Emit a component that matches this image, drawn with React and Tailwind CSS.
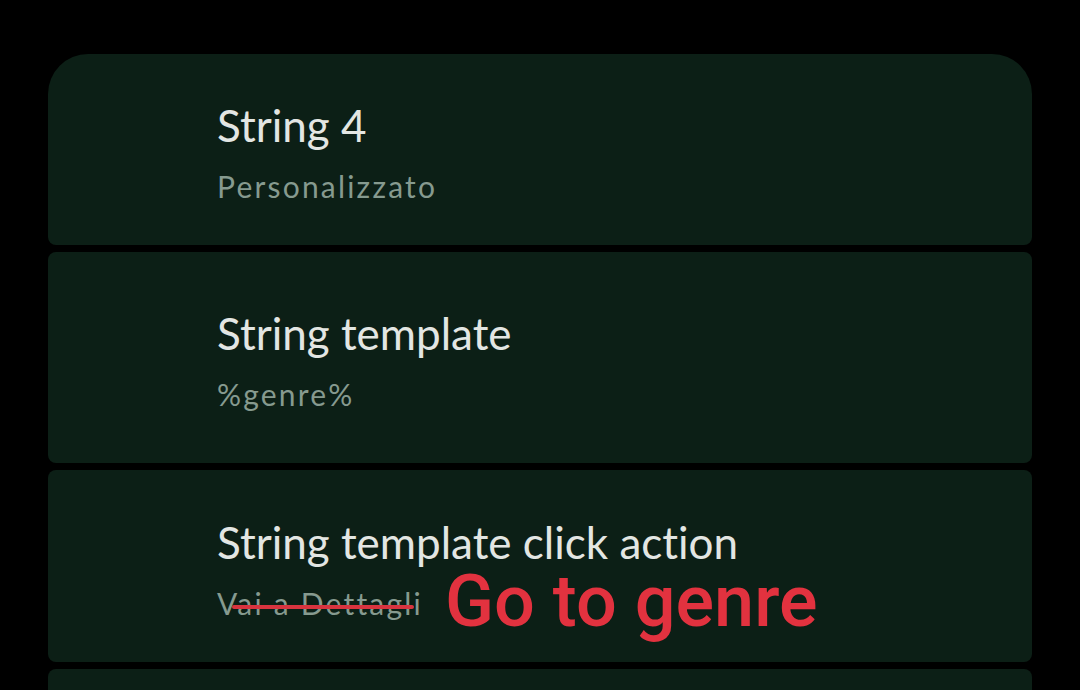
export default function App() {
  const title = "text-[44px] leading-[52px] text-[#e3e6e3] [font-variant-ligatures:none]";
  const sub = "mt-[15px] text-[30px] leading-[40px] tracking-[2.2px] text-[#869a8f] [font-variant-ligatures:none]";
  return (
    <div
      className="w-[1080px] h-[690px] bg-black overflow-hidden pt-[54px] px-[48px] flex flex-col gap-[7px]"
      style={{ fontFamily: "Lato, 'Noto Sans', sans-serif" }}
    >
      <div className="h-[191px] shrink-0 bg-[#0c1f16] rounded-t-[40px] rounded-b-[8px] pl-[169px] pt-[6px] flex flex-col justify-center">
        <div className={title}>String 4</div>
        <div className={sub}>Personalizzato</div>
      </div>
      <div className="h-[211px] shrink-0 bg-[#0c1f16] rounded-[8px] pl-[169px] pt-[6px] flex flex-col justify-center">
        <div className={title}>String template</div>
        <div className={sub}>%genre%</div>
      </div>
      <div className="h-[192px] shrink-0 bg-[#0c1f16] rounded-[8px] pl-[169px] pt-[6px] flex flex-col justify-center relative">
        <div className={title}>String template click action</div>
        <div className={sub}>Vai a Dettagli</div>
        <div className="absolute left-[184px] top-[135px] w-[182px] h-[4px] rounded-full bg-[#d8343f]" />
        <div
          className="absolute left-[397px] top-[92px] text-[72px] leading-[80px] font-medium text-[#e2323f] whitespace-nowrap"
          style={{ fontFamily: "Roboto, sans-serif" }}
        >
          Go to genre
        </div>
      </div>
      <div className="h-[200px] shrink-0 bg-[#0c1f16] rounded-[8px]" />
    </div>
  );
}
